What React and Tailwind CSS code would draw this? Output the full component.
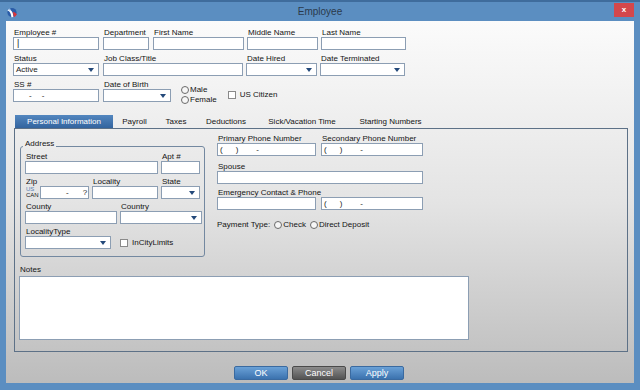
import React from "react";

function Arrow() {
  return (
    <svg width="6" height="4" viewBox="0 0 6 4" className="ml-auto shrink-0">
      <path d="M0 0h6L3 4z" fill="#24497a" />
    </svg>
  );
}

function Box({ className = "", select = false, children }) {
  return (
    <div
      className={`h-[13px] bg-white border border-[#8c9eb3] flex items-center pl-[2px] pr-[4px] text-[8px] leading-none text-[#1a1a1a] ${className}`}
    >
      {children}
      {select && <Arrow />}
    </div>
  );
}

function Label({ children, className = "" }) {
  return (
    <div className={`h-[9px] leading-[9px] pl-[1px] whitespace-nowrap ${className}`}>
      {children}
    </div>
  );
}

function Field({ label, className = "", select = false, children }) {
  return (
    <div className={`flex flex-col ${className}`}>
      <Label>{label}</Label>
      <Box select={select}>{children}</Box>
    </div>
  );
}

function Radio({ label }) {
  return (
    <div className="h-[10px] flex items-center">
      <span className="inline-block w-[8px] h-[8px] rounded-full border border-[#6a6a6a] bg-[#f6f6f6]" />
      <span className="ml-[1px] leading-none">{label}</span>
    </div>
  );
}

function Check({ label, className = "" }) {
  return (
    <div className={`flex items-center ${className}`}>
      <span className="inline-block w-[8px] h-[8px] border border-[#8a8a8a] bg-white" />
      <span className="ml-[4px] leading-none">{label}</span>
    </div>
  );
}

function Phone() {
  return (
    <>
      <span>(</span>
      <span className="ml-[13px]">)</span>
      <span className="ml-[18px]">-</span>
    </>
  );
}

function Btn({ children, kind = "blue", className = "" }) {
  const cls =
    kind === "blue"
      ? "bg-linear-to-b from-[#6aa1d7] to-[#3b72ae] border-[#3a6aa0]"
      : "bg-linear-to-b from-[#8c8c8c] to-[#535353] border-[#4a4a4a]";
  return (
    <div
      className={`h-[14px] rounded-[2px] border text-white text-[9px] leading-[12px] text-center ${cls} ${className}`}
    >
      {children}
    </div>
  );
}

export default function App() {
  return (
    <div className="w-[640px] h-[390px] bg-[#5b8ec1] flex flex-col overflow-hidden font-['Liberation_Sans',Arial,sans-serif] text-[8px] text-[#141414]">
      {/* Title bar */}
      <div className="h-[21px] shrink-0 flex border-t-[2px] border-[#3f6c9c]">
        <div className="w-[40px] pl-[7px] pt-[5px]">
          <svg width="10" height="11" viewBox="0 0 10 11">
            <circle cx="5" cy="5.5" r="4.6" fill="#2a5ca8" />
            <path d="M1.6 2.2 C4.4 3 6 4.8 6.5 10 L4.4 10.3 C4 6.6 2.9 4.3 0.5 3.6z" fill="#ffffff" />
            <path d="M5.8 4.8 C7.8 5.2 9.4 6.2 9.6 7.2 C9 8.9 7.8 9.8 6.8 10.1z" fill="#d8343a" />
            <circle cx="2.6" cy="2.4" r="1" fill="#9cc0ea" />
          </svg>
        </div>
        <div className="flex-1 text-center text-[10px] leading-[19px] text-[#2a3a4c]">
          Employee
        </div>
        <div className="w-[40px] flex justify-end pr-[6px] pt-[1px]">
          <div className="w-[20px] h-[14px] bg-[#d4474b] text-white text-[8px] font-bold leading-[13px] text-center">
            x
          </div>
        </div>
      </div>

      {/* Client area */}
      <div className="mx-[6px] h-[362px] shrink-0 bg-linear-to-b from-[#fbfbfb] via-[#e4e4e4] to-[#bcbcbc] flex flex-col">
        {/* Top form */}
        <div className="pl-[7px] pt-[7px] flex flex-col">
          <div className="flex">
            <Field label="Employee #" className="w-[86px]">
              <span className="ml-[1px] text-[9px] leading-none">|</span>
            </Field>
            <Field label="Department" className="ml-[4px] w-[46px]" />
            <Field label="First Name" className="ml-[4px] w-[91px]" />
            <Field label="Middle Name" className="ml-[3px] w-[71px]" />
            <Field label="Last Name" className="ml-[3px] w-[85px]" />
          </div>
          <div className="flex mt-[4px]">
            <Field label="Status" className="w-[86px]" select>
              <span>Active</span>
            </Field>
            <Field label="Job Class/Title" className="ml-[4px] w-[140px]" />
            <Field label="Date Hired" className="ml-[3px] w-[71px]" select />
            <Field label="Date Terminated" className="ml-[3px] w-[85px]" select />
          </div>
          <div className="flex mt-[4px]">
            <Field label="SS #" className="w-[86px]">
              <span className="ml-[13px]">-</span>
              <span className="ml-[10px]">-</span>
            </Field>
            <Field label="Date of Birth" className="ml-[4px] w-[68px]" select />
            <div className="ml-[10px] mt-[5px] flex flex-col">
              <Radio label="Male" />
              <Radio label="Female" />
            </div>
            <Check label="US Citizen" className="ml-[11px] mt-[10px] h-[9px]" />
          </div>
        </div>

        {/* Tabs */}
        <div className="ml-[9px] mt-[10px] flex h-[13px]">
          <div className="w-[98px] bg-linear-to-b from-[#5387bf] to-[#33649f] text-white text-center leading-[13px]">
            Personal Information
          </div>
          <div className="w-[43px] text-center leading-[13px]">Payroll</div>
          <div className="w-[40px] text-center leading-[13px]">Taxes</div>
          <div className="w-[60px] text-center leading-[13px]">Deductions</div>
          <div className="w-[92px] text-center leading-[13px]">Sick/Vacation Time</div>
          <div className="w-[85px] text-center leading-[13px]">Starting Numbers</div>
        </div>

        {/* Tab panel */}
        <div className="ml-[8px] w-[614px] h-[224px] border border-[#5d7187] flex flex-col">
          <div className="flex items-start">
            {/* Address group */}
            <div className="relative ml-[5px] mt-[17px] w-[185px] h-[111px] border border-[#7388a0] rounded-[3px] pt-[5px] pl-[4px] flex flex-col">
              <div className="absolute top-[-8px] left-[2px] px-[2px] h-[9px] leading-[9px] bg-[#ececec]">
                Address
              </div>
              <div className="flex">
                <Field label="Street" className="w-[133px]" />
                <Field label="Apt #" className="ml-[3px] w-[39px]" />
              </div>
              <div className="flex mt-[3px]">
                <div className="flex flex-col w-[64px]">
                  <Label>Zip</Label>
                  <div className="flex">
                    <div className="w-[15px] flex flex-col text-[6px] leading-[6px] pl-[1px]">
                      <span className="text-[#5a7fb3]">US</span>
                      <span>CAN</span>
                    </div>
                    <Box className="w-[49px]">
                      <span className="ml-[23px]">-</span>
                      <span className="ml-[14px]">?</span>
                    </Box>
                  </div>
                </div>
                <Field label="Locality" className="ml-[3px] w-[66px]" />
                <Field label="State" className="ml-[3px] w-[39px]" select />
              </div>
              <div className="flex mt-[3px]">
                <Field label="County" className="w-[92px]" />
                <Field label="Country" className="ml-[3px] w-[82px]" select />
              </div>
              <div className="flex mt-[3px] items-end">
                <Field label="LocalityType" className="w-[86px]" select />
                <Check label="InCityLimits" className="ml-[9px] h-[13px]" />
              </div>
            </div>

            {/* Right column */}
            <div className="ml-[12px] mt-[5px] flex flex-col">
              <div className="flex">
                <Field label="Primary Phone Number" className="w-[99px]">
                  <Phone />
                </Field>
                <Field label="Secondary Phone Number" className="ml-[5px] w-[102px]">
                  <Phone />
                </Field>
              </div>
              <Field label="Spouse" className="mt-[6px] w-[206px]" />
              <div className="flex mt-[4px]">
                <Field label="Emergency Contact & Phone" className="w-[99px]" />
                <div className="ml-[5px] w-[102px] flex flex-col">
                  <Label>&nbsp;</Label>
                  <Box>
                    <Phone />
                  </Box>
                </div>
              </div>
              <div className="flex items-center h-[9px] mt-[10px]">
                <span className="leading-none">Payment Type:</span>
                <span className="ml-[4px]">
                  <Radio label="Check" />
                </span>
                <span className="ml-[4px]">
                  <Radio label="Direct Deposit" />
                </span>
              </div>
            </div>
          </div>

          {/* Notes */}
          <div className="ml-[4px] mt-[8px] flex flex-col">
            <Label>Notes</Label>
            <div className="mt-[2px] w-[450px] h-[64px] bg-white border border-[#8c9eb3]" />
          </div>
        </div>

        {/* Buttons */}
        <div className="mt-[14px] ml-[228px] flex">
          <Btn className="w-[54px]">OK</Btn>
          <Btn kind="gray" className="ml-[4px] w-[54px]">Cancel</Btn>
          <Btn className="ml-[4px] w-[54px]">Apply</Btn>
        </div>
      </div>
    </div>
  );
}
